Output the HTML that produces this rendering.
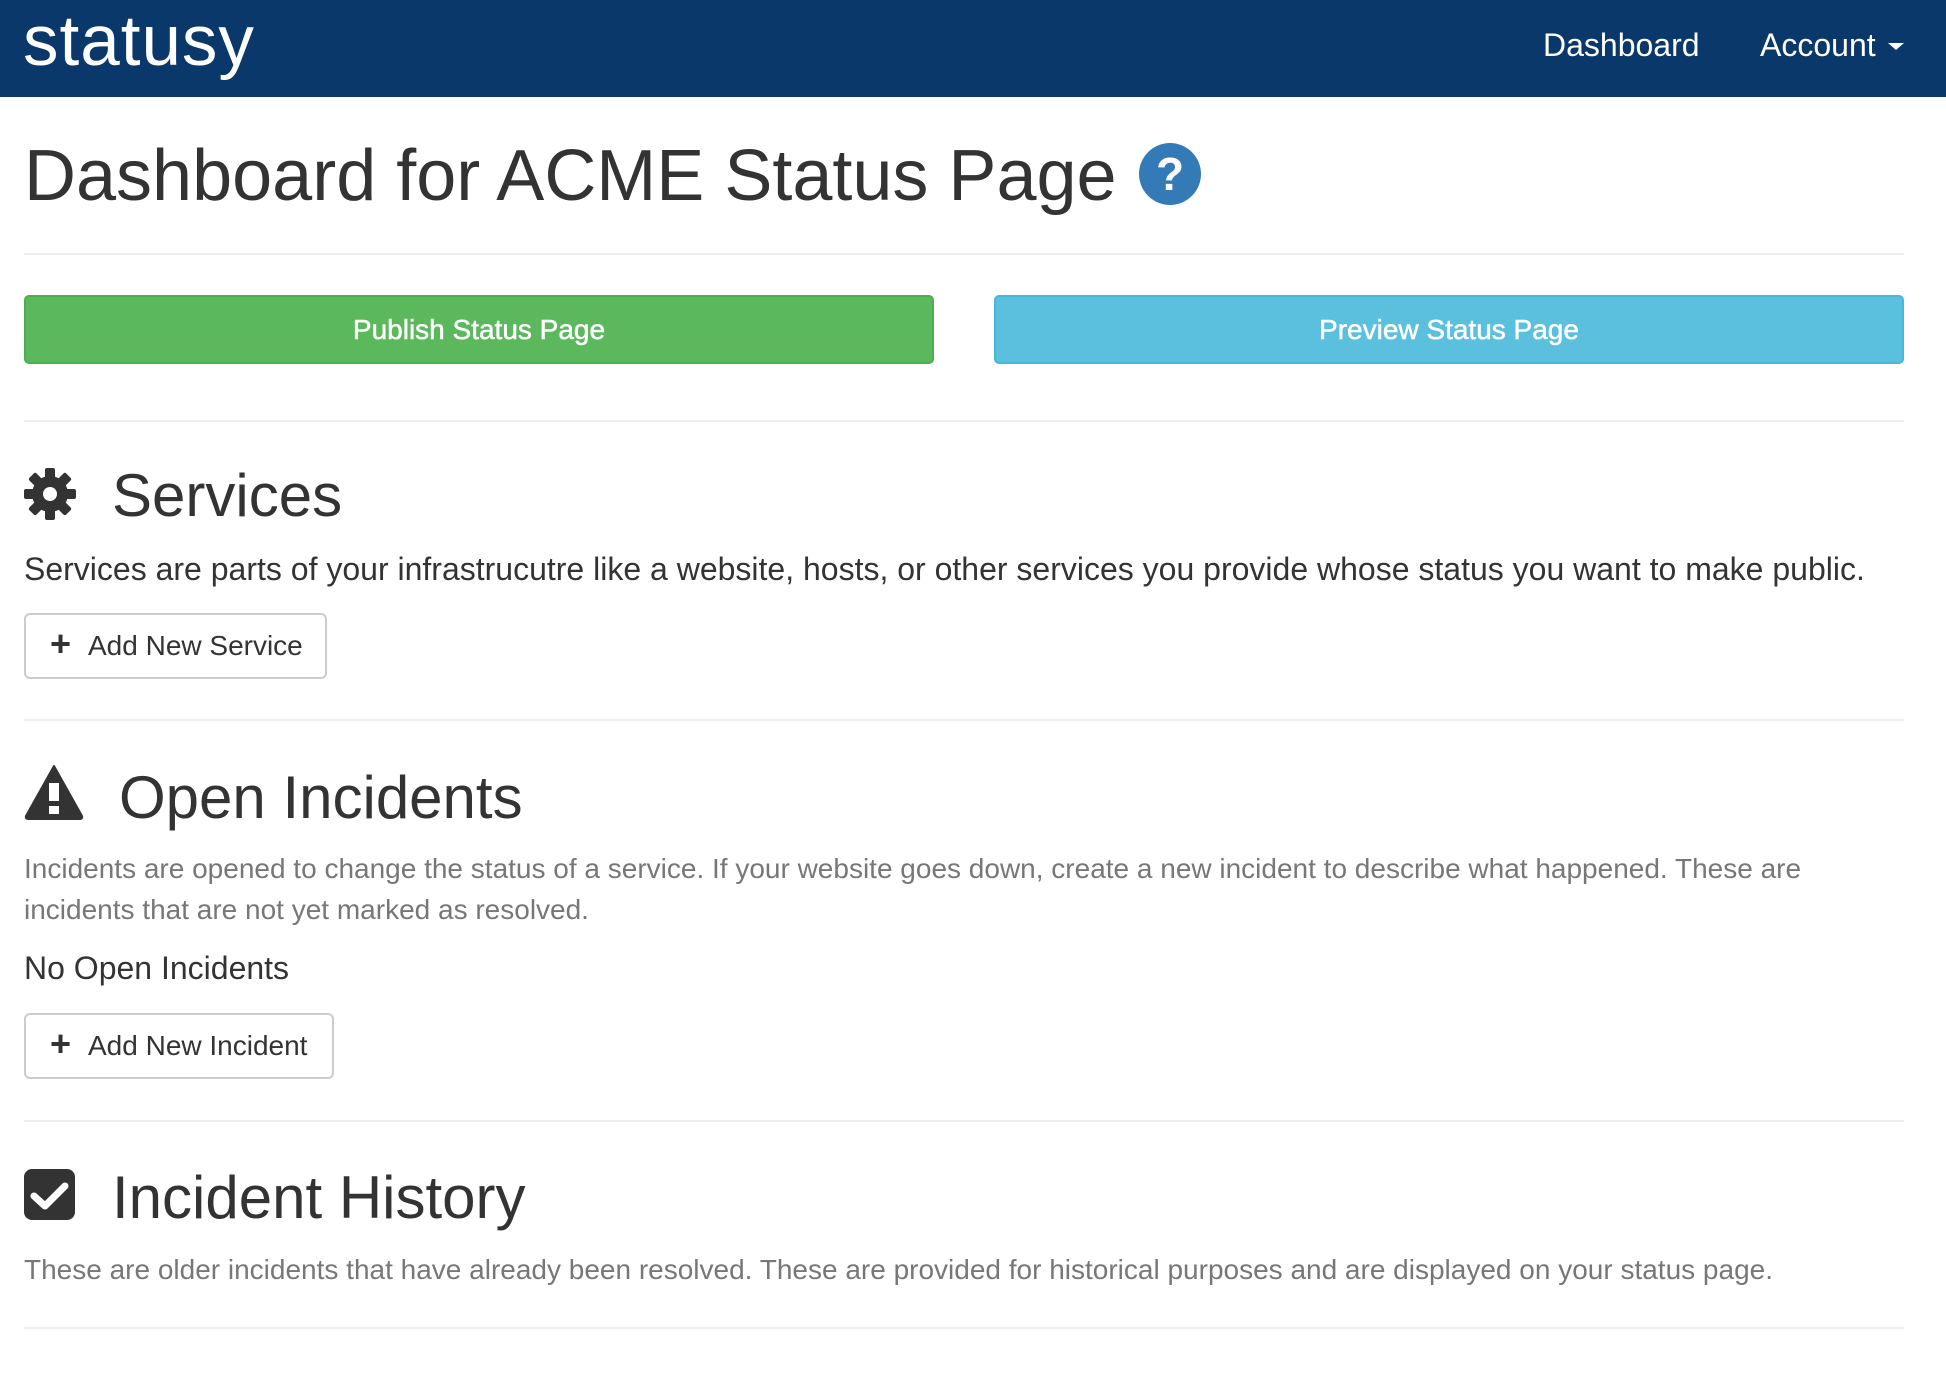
<!DOCTYPE html>
<html><head><meta charset="utf-8"><style>
*{margin:0;padding:0;box-sizing:border-box}
body{width:1946px;height:1378px;background:#fff;font-family:"Liberation Sans",Arial,sans-serif;color:#333;position:relative;overflow:hidden}
.a{position:absolute;white-space:nowrap;line-height:1}
.hdr{position:absolute;left:0;top:0;width:1946px;height:97px;background:#0a386b}
.hr{position:absolute;left:24px;width:1880px;height:2px;background:#eee}
.btn{position:absolute;display:flex;align-items:center;justify-content:center;border-radius:5px;font-size:28px;color:#fff;-webkit-text-stroke:0.5px #fff}
.wbtn{position:absolute;border:2px solid #ccc;border-radius:6px;display:flex;align-items:center;font-size:28px;color:#333;background:#fff}
.gray{color:#777;font-size:28px;line-height:41px;position:absolute;left:24px;width:1840px}
</style></head><body>
<div class="hdr"></div>
<div class="a" style="left:23px;top:6px;font-size:71px;color:#fff;letter-spacing:1px">statusy</div>
<div class="a" style="left:1543px;top:29px;font-size:32px;color:#fff">Dashboard</div>
<div class="a" style="left:1760px;top:29px;font-size:32px;color:#fff">Account</div>
<div style="position:absolute;left:1888px;top:43px;width:0;height:0;border-left:8px solid transparent;border-right:8px solid transparent;border-top:7px solid #fff"></div>

<div class="a" style="left:24px;top:140px;font-size:72px">Dashboard for ACME Status Page</div>
<div style="position:absolute;left:1139px;top:143px;width:62px;height:62px;border-radius:50%;background:#337ab7;color:#fff;font-weight:bold;font-size:46px;display:flex;align-items:center;justify-content:center">?</div>
<div class="hr" style="top:253px"></div>

<div class="btn" style="left:24px;top:295px;width:910px;height:69px;background:#5cb85c;border:2px solid #4cae4c">Publish Status Page</div>
<div class="btn" style="left:994px;top:295px;width:910px;height:69px;background:#5bc0de;border:2px solid #46b8da">Preview Status Page</div>
<div class="hr" style="top:420px"></div>

<svg style="position:absolute;left:24px;top:468px" width="52" height="52" viewBox="0 0 52 52"><g fill="#333"><g transform="translate(26 26)"><rect x="-5" y="-26" width="10" height="52" rx="2"/><rect x="-5" y="-26" width="10" height="52" rx="2" transform="rotate(45)"/><rect x="-5" y="-26" width="10" height="52" rx="2" transform="rotate(90)"/><rect x="-5" y="-26" width="10" height="52" rx="2" transform="rotate(135)"/><circle r="18"/><circle r="7" fill="#fff"/></g></g></svg>
<div class="a" style="left:112px;top:466px;font-size:60px">Services</div>
<div class="a" style="left:24px;top:553px;font-size:32px">Services are parts of your infrastrucutre like a website, hosts, or other services you provide whose status you want to make public.</div>
<div class="wbtn" style="left:24px;top:613px;width:303px;height:66px"><span style="margin-left:24px;font-size:36px;font-weight:bold;width:22px;line-height:1;margin-top:-4px">+</span><span style="margin-left:16px">Add New Service</span></div>
<div class="hr" style="top:719px"></div>

<svg style="position:absolute;left:24px;top:764px" width="60" height="56" viewBox="0 0 60 56"><path d="M30 2 L58 52 Q59 55 55 55 L5 55 Q1 55 2 52 Z" fill="#333" stroke="#333" stroke-width="2" stroke-linejoin="round"/><rect x="25" y="19" width="10" height="18" fill="#fff"/><rect x="25" y="42" width="10" height="8" fill="#fff"/></svg>
<div class="a" style="left:119px;top:768px;font-size:60px">Open Incidents</div>
<div class="gray" style="top:848px">Incidents are opened to change the status of a service. If your website goes down, create a new incident to describe what happened. These are incidents that are not yet marked as resolved.</div>
<div class="a" style="left:24px;top:952px;font-size:32px">No Open Incidents</div>
<div class="wbtn" style="left:24px;top:1013px;width:310px;height:66px"><span style="margin-left:24px;font-size:36px;font-weight:bold;width:22px;line-height:1;margin-top:-4px">+</span><span style="margin-left:16px">Add New Incident</span></div>
<div class="hr" style="top:1120px"></div>

<svg style="position:absolute;left:24px;top:1169px" width="52" height="52" viewBox="0 0 52 52"><rect x="0" y="0" width="51" height="51" rx="8" fill="#333"/><path d="M10 27 L21 37 L41 17" fill="none" stroke="#fff" stroke-width="7" stroke-linecap="round" stroke-linejoin="round"/></svg>
<div class="a" style="left:112px;top:1168px;font-size:60px">Incident History</div>
<div class="gray" style="top:1249px">These are older incidents that have already been resolved. These are provided for historical purposes and are displayed on your status page.</div>
<div class="hr" style="top:1327px"></div>
</body></html>
